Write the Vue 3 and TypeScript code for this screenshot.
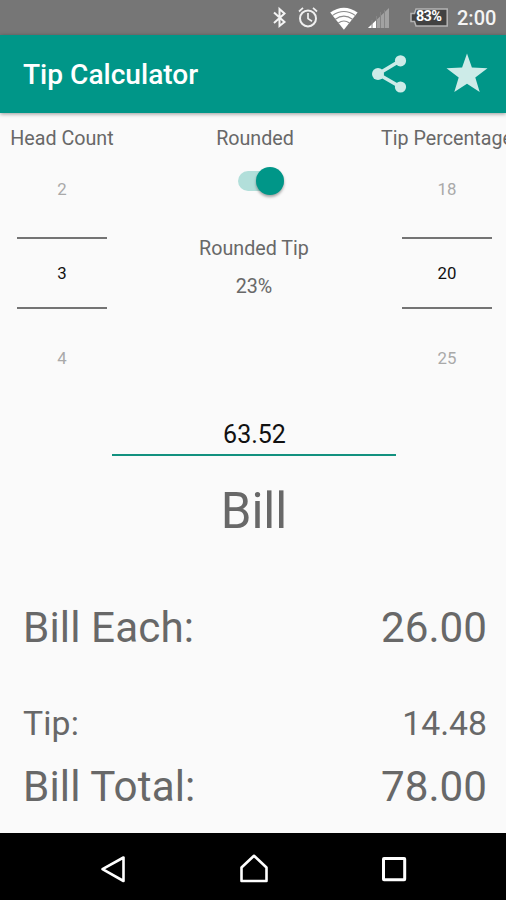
<script setup lang="ts">
import { ref } from 'vue'

interface Picker {
  label: string
  side: string
  values: number[]
}
interface Result {
  label: string
  value: string
  kind: string
}

const headCount: Picker = { label: 'Head Count', side: 'left', values: [2, 3, 4] }
const tipPercentage: Picker = { label: 'Tip Percentage', side: 'right', values: [18, 20, 25] }
const rounded = ref(true)
const bill = ref('63.52')
const results: Result[] = [
  { label: 'Bill Each:', value: '26.00', kind: 'each' },
  { label: 'Tip:', value: '14.48', kind: 'tip' },
  { label: 'Bill Total:', value: '78.00', kind: 'total' },
]
</script>

<template>
  <div class="screen">
    <header class="status">
      <svg class="status-icons" width="130" height="35" viewBox="0 0 130 35">
        <path d="M2 12.5 12.5 22 7.5 26V9l5 4.5L2 23" fill="none" stroke="#f4f4f4" stroke-width="2" />
        <g fill="none" stroke="#f0f0f0" stroke-width="2">
          <circle cx="36" cy="18.4" r="8" />
          <path d="M36 13v5.6l4 2.6M27 11.5l4-3.6M45 11.5l-4-3.6" stroke-width="1.7" />
        </g>
        <path d="M58.2 12.6Q71.9 3 85.6 12.6L71.9 29.7Z" fill="#fff" />
        <g fill="none" stroke="#8c8c8c" stroke-width="1.1">
          <path d="M60.3 15.6Q71.9 7.4 83.5 15.6M63.3 19.3Q71.9 13 80.5 19.3M66.3 23Q71.9 19 77.5 23" />
        </g>
        <path d="M96 28 117 8v20Z" fill="#a2a2a2" />
        <path d="M96 28 104.5 19.9V28Z" fill="#fff" />
        <path d="M100 20v8M104.5 16v12M108.5 12v16M112.5 10v18" stroke="#858585" stroke-width="1" />
      </svg>
      <span class="battery">
        <svg width="40" height="20" viewBox="0 0 40 20">
          <path d="M7 1H38.2V18H7L5.5 13.5H2V5.500H5.5Z" fill="#424242" stroke="#b4b4b4" stroke-width="1.5" />
        </svg>
        <b class="battery-level">83%</b>
      </span>
      <span class="clock">2:00</span>
    </header>

    <div class="toolbar">
      <h1 class="title">Tip Calculator</h1>
      <svg class="share" width="37" height="40" viewBox="0 0 37 40">
        <path d="M30.5 6.5 8 20l22.5 13" fill="none" stroke="#cdebe8" stroke-width="3.6" />
        <g fill="#cdebe8">
          <circle cx="30.5" cy="6.8" r="5.6" />
          <circle cx="8" cy="20" r="6" />
          <circle cx="30.5" cy="33" r="5.6" />
        </g>
      </svg>
      <svg class="star" width="42" height="40" viewBox="0 0 42 40">
        <path d="M21 0.5 25.9 14.5 41.5 15.2 29.3 24.6 33.7 39 21 30.7 8.3 39 12.7 24.6 0.5 15.2 16.1 14.5Z" fill="#cdebe8" />
      </svg>
    </div>

    <main class="content">
      <section class="options">
        <div v-for="picker in [headCount]" :key="picker.label" class="picker" :class="picker.side">
          <div class="label">{{ picker.label }}</div>
          <div class="wheel">
            <span class="faded">{{ picker.values[0] }}</span>
            <span class="current">{{ picker.values[1] }}</span>
            <span class="faded">{{ picker.values[2] }}</span>
          </div>
        </div>

        <div class="rounding">
          <div class="label">Rounded</div>
          <button class="switch" :class="{ on: rounded }" aria-label="Rounded" @click="rounded = !rounded">
            <span class="thumb"></span>
          </button>
          <div class="label rounded-tip">Rounded Tip</div>
          <div class="label percent">23%</div>
        </div>

        <div v-for="picker in [tipPercentage]" :key="picker.label" class="picker" :class="picker.side">
          <div class="label">{{ picker.label }}</div>
          <div class="wheel">
            <span class="faded">{{ picker.values[0] }}</span>
            <span class="current">{{ picker.values[1] }}</span>
            <span class="faded">{{ picker.values[2] }}</span>
          </div>
        </div>
      </section>

      <section class="bill">
        <input v-model="bill" class="amount" aria-label="Bill" />
        <div class="bill-label">Bill</div>
      </section>

      <section class="results">
        <div v-for="row in results" :key="row.kind" class="result" :class="row.kind">
          <span class="name">{{ row.label }}</span>
          <span class="value">{{ row.value }}</span>
        </div>
      </section>
    </main>

    <nav class="navbar">
      <svg width="30" height="32" viewBox="0 0 30 32">
        <path d="M25.500 4.500v23.500L4.500 16.200Z" fill="none" stroke="#fff" stroke-width="2.6" stroke-linejoin="round" />
      </svg>
      <svg width="30" height="32" viewBox="0 0 30 32">
        <path d="M15 2.800 27.500 14.500V28H2.500V14.500Z" fill="none" stroke="#fff" stroke-width="2.6" stroke-linejoin="round" />
      </svg>
      <svg width="30" height="32" viewBox="0 0 30 32">
        <rect x="4.5" y="5.5" width="21.2" height="21.2" rx="0.5" fill="none" stroke="#fff" stroke-width="3" />
      </svg>
    </nav>
  </div>
</template>

<style>
body {
  margin: 0;
  background: #fafafa;
}
</style>

<style scoped>
.screen {
  width: 506px;
  height: 900px;
  display: flex;
  flex-direction: column;
  overflow: hidden;
  background: #fafafa;
  color: #686868;
  font-family: Roboto, "Liberation Sans", sans-serif;
}
.status {
  height: 35px;
  flex: none;
  box-sizing: border-box;
  padding-left: 272px;
  display: flex;
  align-items: center;
  background: #767676;
  color: #f4f4f4;
}
.status-icons {
  flex: none;
}
.battery {
  position: relative;
  display: flex;
  width: 40px;
  height: 20px;
  margin-left: 7px;
}
.battery-level {
  position: absolute;
  inset: -1px 0 0 7px;
  color: #fff;
  font-size: 14.5px;
  letter-spacing: -0.7px;
  line-height: 20px;
}
.clock {
  margin-left: 8px;
  padding-top: 2px;
  font-size: 20px;
  line-height: 33px;
  font-weight: 500;
}
.toolbar {
  height: 78px;
  flex: none;
  box-sizing: border-box;
  padding: 0 18px 0 23px;
  display: flex;
  align-items: center;
  background: #009688;
  box-shadow: 0 1px 4px rgba(0, 0, 0, 0.4);
  z-index: 1;
}
.title {
  margin: 2px auto 0 0;
  color: #fff;
  font-size: 28.1px;
  line-height: 34px;
  font-weight: 500;
}
.share {
  margin: -1px 39px 0 0;
}
.star {
  margin-top: -3px;
}
.content {
  flex: 1;
  display: flex;
  flex-direction: column;
}
.options {
  height: 297px;
  display: grid;
  grid-template-columns: 124px 1fr 118px;
}
.label {
  padding-top: 14px;
  font-size: 19.7px;
  line-height: 24px;
  text-align: center;
  white-space: nowrap;
}
.picker.right .label {
  margin-left: -7px;
  text-align: left;
}
.wheel {
  width: 90px;
  margin: 25px 0 0 17px;
  display: flex;
  flex-direction: column;
  font-size: 16.8px;
  text-align: center;
}
.picker.right .wheel {
  margin-left: 14px;
}
.faded {
  color: #a9a9a9;
  line-height: 27px;
}
.current {
  margin: 34px 0 36px;
  border: solid #747474;
  border-width: 2px 0;
  color: #111;
  line-height: 68px;
}
.rounding {
  display: flex;
  flex-direction: column;
  align-items: center;
  padding-right: 2px;
}
.switch {
  width: 46px;
  height: 20px;
  margin: 20px 0 0 11px;
  padding: 0;
  display: flex;
  align-items: center;
  border: 0;
  border-radius: 10px;
  background: #c8c8c8;
}
.switch.on {
  justify-content: flex-end;
  background: #b2dfda;
}
.thumb {
  width: 28px;
  height: 28px;
  flex: none;
  border-radius: 50%;
  background: #fff;
  box-shadow: 0 2px 3px rgba(0, 0, 0, 0.35);
}
.on .thumb {
  background: #009688;
}
.rounded-tip,
.percent {
  margin-right: 2px;
}
.rounded-tip {
  padding-top: 46px;
}
.bill {
  display: flex;
  flex-direction: column;
  align-items: center;
}
.amount {
  width: 284px;
  height: 46px;
  box-sizing: border-box;
  margin-left: 2px;
  padding: 4px 0 0 1px;
  border: 0;
  border-bottom: 2px solid #12917f;
  outline: 0;
  background: none;
  color: #111;
  font: 25px Roboto, "Liberation Sans", sans-serif;
  text-align: center;
}
.bill-label {
  margin: 25px 0 0 2px;
  font-size: 49.2px;
  line-height: 60px;
}
.results {
  padding: 61px 19px 0 23px;
}
.result {
  display: flex;
  justify-content: space-between;
  font-size: 42.2px;
  line-height: 52px;
}
.name {
  letter-spacing: 0.12px;
}
.result.tip {
  margin-top: 50px;
  font-size: 33.75px;
  line-height: 40px;
}
.result.total {
  margin-top: 17px;
}
.navbar {
  height: 67px;
  flex: none;
  box-sizing: border-box;
  padding: 4px 97px 0 98px;
  display: flex;
  align-items: center;
  justify-content: space-between;
  background: #000;
}
</style>
